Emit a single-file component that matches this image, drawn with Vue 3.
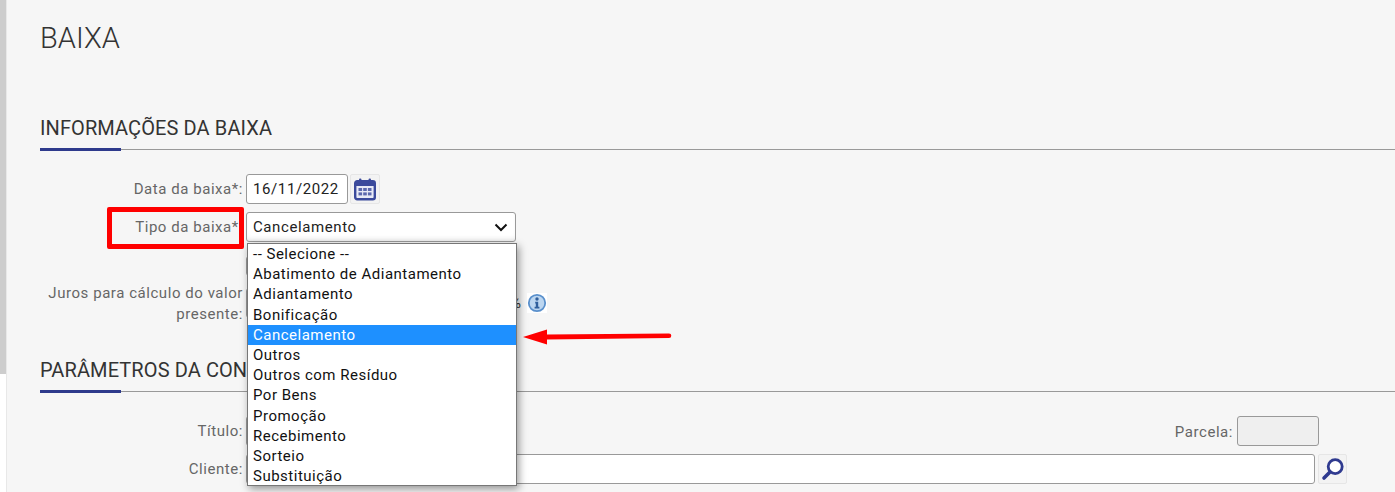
<template>
  <div class="page">
    <div class="rail"><div class="rail-fill"></div></div>

    <main class="main">
      <h1 class="title">BAIXA</h1>

      <section class="info-section">
        <h2 class="heading">INFORMAÇÕES DA BAIXA</h2>

        <div class="row row-date">
          <label class="label">Data da baixa*:</label>
          <div class="input date">16/11/2022</div>
          <button class="icon-btn">
            <svg width="24" height="24" viewBox="0 0 24 24">
              <rect x="2.2" y="4.2" width="19.6" height="18" rx="2" fill="#e8eaf6" stroke="#3b4a9c" stroke-width="2.4" />
              <rect x="2" y="4" width="20" height="5" fill="#3b4a9c" />
              <rect x="6" y="1.5" width="2.4" height="5" rx="1" fill="#3b4a9c" />
              <rect x="15.6" y="1.5" width="2.4" height="5" rx="1" fill="#3b4a9c" />
              <g fill="#5b68ad">
                <rect x="5.5" y="11" width="3.6" height="3" />
                <rect x="10.2" y="11" width="3.6" height="3" />
                <rect x="14.9" y="11" width="3.6" height="3" />
                <rect x="5.5" y="15.4" width="3.6" height="3" />
                <rect x="10.2" y="15.4" width="3.6" height="3" />
                <rect x="14.9" y="15.4" width="3.6" height="3" />
              </g>
            </svg>
          </button>
        </div>

        <div class="row row-type">
          <label class="label">Tipo da baixa*:</label>
          <div class="select-wrap">
            <div class="input select">
              <span>Cancelamento</span>
              <svg width="14" height="9" viewBox="0 0 14 9">
                <path d="M1.5 1.5 7 7l5.5-5.5" fill="none" stroke="#111" stroke-width="2" />
              </svg>
            </div>
            <ul class="options">
              <li v-for="opt in options" :key="opt" :class="{ active: opt === 'Cancelamento' }">{{ opt }}</li>
            </ul>
          </div>
          <div class="red-box"></div>
        </div>

        <!-- control hidden behind the open list, only its edge shows -->
        <div class="row row-hidden">
          <div class="label"></div>
          <div class="input covered"></div>
        </div>

        <div class="row row-interest">
          <label class="label">Juros para cálculo do valor presente:</label>
          <div class="input rate"></div>
          <span class="percent">%</span>
          <span class="info">
            <svg width="20" height="20" viewBox="0 0 20 20">
              <circle cx="10" cy="10" r="8.2" fill="#bcd6f0" stroke="#5a90cc" stroke-width="1.8" />
              <circle cx="10" cy="6" r="1.7" fill="#2f5f9c" />
              <path d="M8.2 8.8h3v5h1.2v1.6H7.6v-1.6h1.2v-3.4h-.6z" fill="#2f5f9c" />
            </svg>
          </span>
        </div>
      </section>

      <section class="params-section">
        <h2 class="heading">PARÂMETROS DA CONSULTA</h2>

        <div class="row row-title">
          <label class="label">Título:</label>
          <div class="input title-input"></div>
          <label class="parcel-label">Parcela:</label>
          <div class="input parcel"></div>
        </div>

        <div class="row row-client">
          <label class="label">Cliente:</label>
          <div class="input client"></div>
          <button class="icon-btn search">
            <svg width="24" height="24" viewBox="0 0 24 24">
              <circle cx="14.2" cy="9.6" r="7" fill="#fff" stroke="#2f3a8f" stroke-width="2.8" />
              <path d="M9 15 3 21" stroke="#2f3a8f" stroke-width="3.6" stroke-linecap="round" />
            </svg>
          </button>
        </div>
      </section>
    </main>

    <svg class="arrow" width="150" height="20" viewBox="0 0 150 20">
      <path d="M1 10 25 2.5V7.5L147 6.5a2.2 2.2 0 0 1 0 4.6L25 12.5V17.5z" fill="#f00" />
    </svg>
  </div>
</template>

<script setup>
const options = [
  "-- Selecione --",
  "Abatimento de Adiantamento",
  "Adiantamento",
  "Bonificação",
  "Cancelamento",
  "Outros",
  "Outros com Resíduo",
  "Por Bens",
  "Promoção",
  "Recebimento",
  "Sorteio",
  "Substituição",
];
</script>

<style>
html,
body {
  margin: 0;
  background: #fff;
  overflow: hidden;
}
</style>

<style scoped>
.page {
  position: relative;
  display: flex;
  height: 492px;
  font-family: Roboto, "Liberation Sans", sans-serif;
  overflow: hidden;
}

.rail {
  width: 6px;
  flex: none;
}

.rail-fill {
  height: 374px;
  background: #cdcdcd;
}

.main {
  flex: 1;
  padding: 0 48px 0 33px;
  border-left: 1px solid #e8e8e8;
  background: #f6f6f6;
}

.title {
  margin: 0;
  padding-top: 20px;
  height: 48px;
  font-size: 29px;
  line-height: 36px;
  font-weight: 300;
  color: #333;
}

.info-section {
  margin-top: 45px;
}

.params-section {
  margin-top: 31px;
}

.heading {
  position: relative;
  margin: 0 -48px 0 0;
  height: 36px;
  border-bottom: 1px solid #999;
  font-size: 20px;
  line-height: 30px;
  font-weight: 400;
  letter-spacing: 0.1px;
  color: #333;
  white-space: nowrap;
}

.heading::after {
  content: "";
  position: absolute;
  left: 0;
  bottom: -2px;
  width: 81px;
  height: 3px;
  background: #2e3a8c;
}

.row {
  display: flex;
  align-items: center;
}

.row-date {
  margin-top: 24px;
}

.row-type {
  position: relative;
  margin-top: 8px;
}

.row-hidden {
  margin-top: 14px;
}

.row-interest {
  margin-top: 6px;
}

.row-title {
  margin-top: 24px;
}

.row-client {
  margin-top: 8px;
}

.label {
  width: 203px;
  flex: none;
  margin-right: 3px;
  padding-top: 1px;
  box-sizing: border-box;
  text-align: right;
  font-size: 15px;
  line-height: 20.5px;
  letter-spacing: 0.55px;
  color: #666;
}

.input {
  box-sizing: border-box;
  height: 30px;
  padding: 0 6px;
  border: 1px solid #999;
  border-radius: 3px;
  background: #fff;
  font-size: 15px;
  line-height: 28px;
  letter-spacing: 0.6px;
  color: #222;
}

.date {
  width: 102px;
}

.covered {
  width: 100px;
  height: 20px;
}

.icon-btn {
  box-sizing: border-box;
  width: 30px;
  height: 30px;
  margin-left: 2px;
  padding: 0;
  display: flex;
  align-items: center;
  justify-content: center;
  border: 1px solid #e6e6e6;
  border-radius: 2px;
  background: #f3f3f3;
}

.select-wrap {
  position: relative;
}

.select {
  width: 270px;
  display: flex;
  align-items: center;
  justify-content: space-between;
  padding-right: 7px;
  box-shadow: inset 0 -4px 6px -4px rgba(0, 0, 0, 0.15);
}

.options {
  position: absolute;
  z-index: 3;
  top: 31px;
  left: 1px;
  width: 270px;
  height: 243px;
  box-sizing: border-box;
  margin: 0;
  padding: 0;
  list-style: none;
  border: 1px solid #777;
  background: #fff;
  box-shadow: 2px 3px 8px rgba(0, 0, 0, 0.4);
  font-size: 15px;
  letter-spacing: 0.5px;
  color: #111;
}

.options li {
  height: 20.2px;
  padding-left: 5px;
  line-height: 20px;
  white-space: nowrap;
}

.options li.active {
  background: #1e90ff;
  color: #fff;
}

.red-box {
  position: absolute;
  left: 67px;
  top: -5px;
  box-sizing: border-box;
  width: 137px;
  height: 42px;
  border: 5px solid #f00;
  border-radius: 2px;
}

.rate {
  width: 262px;
}

.percent {
  margin-left: 2px;
  font-size: 15px;
  color: #333;
}

.info {
  display: flex;
  margin-left: 6px;
  background: #fff;
}

.title-input {
  width: 120px;
}

.parcel-label {
  margin-left: auto;
  margin-right: 4px;
  padding-top: 1px;
  font-size: 15px;
  letter-spacing: 0.55px;
  color: #666;
}

.parcel {
  width: 82px;
  margin-right: 28px;
  background: #efefef;
}

.client {
  flex: 1;
}

.search {
  width: 29px;
  margin-left: 3px;
}

.arrow {
  position: absolute;
  left: 522px;
  top: 327px;
}
</style>
